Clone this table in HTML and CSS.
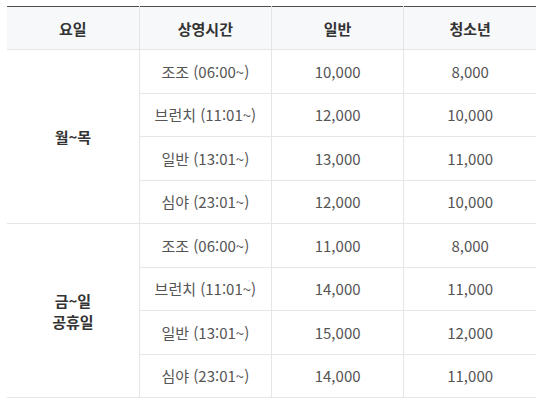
FILE: index.html
```html
<!DOCTYPE html>
<html lang="ko">
<head>
<meta charset="utf-8">
<link rel="stylesheet" href="styles.css">
</head>
<body>
<table class="price">
  <thead>
    <tr><th>요일</th><th>상영시간</th><th>일반</th><th>청소년</th></tr>
  </thead>
  <tbody>
    <tr><td rowspan="4" class="day">월~목</td><td>조조 (06:00~)</td><td>10,000</td><td>8,000</td></tr>
    <tr><td>브런치 (11:01~)</td><td>12,000</td><td>10,000</td></tr>
    <tr><td>일반 (13:01~)</td><td>13,000</td><td>11,000</td></tr>
    <tr><td>심야 (23:01~)</td><td>12,000</td><td>10,000</td></tr>
    <tr><td rowspan="4" class="day">금~일<br>공휴일</td><td>조조 (06:00~)</td><td>11,000</td><td>8,000</td></tr>
    <tr><td>브런치 (11:01~)</td><td>14,000</td><td>11,000</td></tr>
    <tr><td>일반 (13:01~)</td><td>15,000</td><td>12,000</td></tr>
    <tr><td>심야 (23:01~)</td><td>14,000</td><td>11,000</td></tr>
  </tbody>
</table>
</body>
</html>
```
FILE: styles.css
```css
html, body { margin: 0; padding: 0; background: #fff; }
body { padding: 6px 18px 0 7px; font-family: "Noto Sans CJK KR", "Noto Sans", sans-serif; }
.price {
  width: 529px;
  border-collapse: collapse;
  table-layout: fixed;
  border-top: 1px solid #4d4d4d;
  font-size: 15px;
  color: #555;
}
.price th, .price td {
  text-align: center;
  vertical-align: middle;
  border: 1px solid #e6e6e6;
  padding: 0;
  height: 42.5px;
  line-height: 21px;
}
.price tr > :first-child { border-left: none; }
.price tr > :last-child { border-right: none; }
.price tbody tr:not(:first-child):not(:nth-child(5)) > :first-child { border-left: 1px solid #e6e6e6; }
.price th {
  background: #f7f8fa;
  color: #333;
  font-weight: 600;
  height: 42px;
  border-top: 1px solid #4d4d4d;
}
.price .day { color: #333; font-weight: 600; }
```
